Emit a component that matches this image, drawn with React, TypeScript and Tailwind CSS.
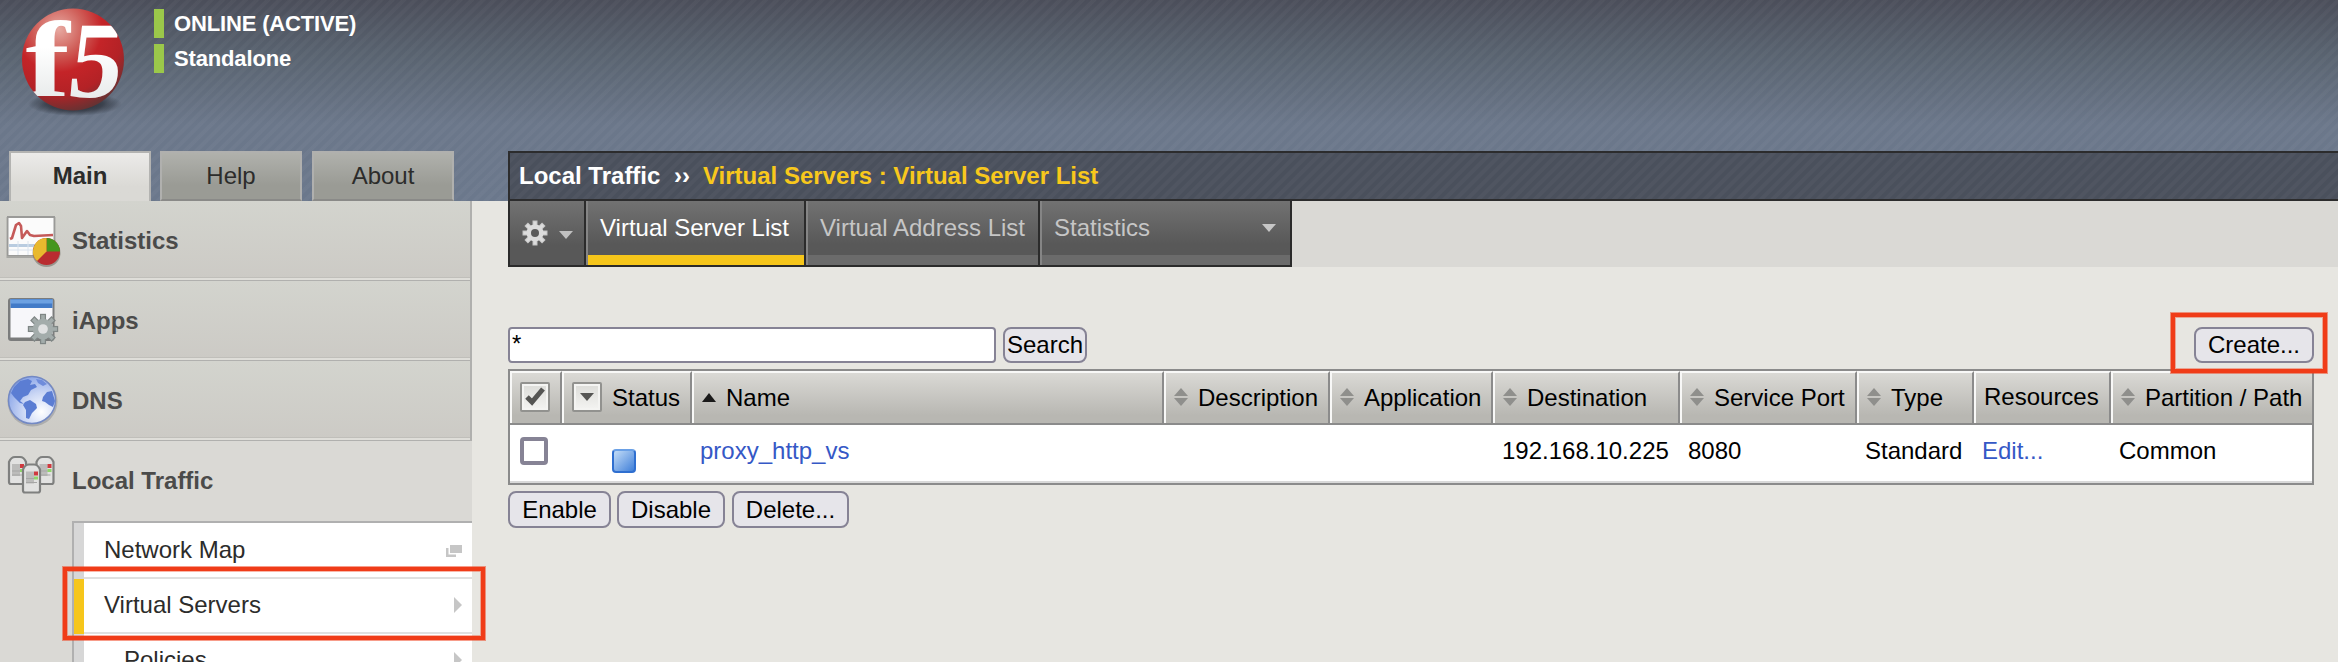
import type { ReactNode } from "react";

function Logo() {
  return (
    <svg className="block" width="120" height="112" viewBox="14 6 120 112">
      <defs>
        <radialGradient id="ball" cx="0.36" cy="0.2" r="0.85">
          <stop offset="0" stopColor="#e8aaa2" />
          <stop offset="0.28" stopColor="#d0605a" />
          <stop offset="0.5" stopColor="#c42428" />
          <stop offset="0.75" stopColor="#b32226" />
          <stop offset="1" stopColor="#5c3434" />
        </radialGradient>
        <radialGradient id="ballShadow">
          <stop offset="0" stopColor="#15181e" stopOpacity="0.95" />
          <stop offset="0.6" stopColor="#20242c" stopOpacity="0.6" />
          <stop offset="1" stopColor="#20242c" stopOpacity="0" />
        </radialGradient>
        <linearGradient id="digits" x1="0" y1="0" x2="0" y2="1">
          <stop offset="0.4" stopColor="#ffffff" />
          <stop offset="1" stopColor="#dfe3e3" />
        </linearGradient>
        <clipPath id="ballClip">
          <circle cx="73" cy="59.500" r="51" />
        </clipPath>
      </defs>
      <ellipse cx="75" cy="104" rx="47" ry="12" fill="url(#ballShadow)" />
      <circle cx="73" cy="59.500" r="51" fill="url(#ball)" />
      <g clipPath="url(#ballClip)" fontFamily="'Liberation Serif', serif" fontWeight="700" fontSize="109" fill="url(#digits)">
        <text transform="translate(25.500 96) scale(1.22 1)">f</text>
        <text transform="translate(65.500 96.500) skewX(-7) scale(0.98 1)">5</text>
      </g>
    </svg>
  );
}

const TEETH = [0, 45, 90, 135, 180, 225, 270, 315];

function Gear({ size, fill, stroke, hole }: { size: number; fill: string; stroke: string; hole: string }) {
  return (
    <svg width={size} height={size} viewBox="-14 -14 28 28">
      <g fill={fill} stroke={stroke} strokeWidth="1">
        {TEETH.map((a) => (
          <rect key={a} x="-2" y="-12" width="4" height="8" transform={`rotate(${a})`} />
        ))}
      </g>
      <circle r="8.500" fill={fill} />
      <circle r="4" fill={hole} />
    </svg>
  );
}

function StatsIcon() {
  return (
    <svg width="58" height="54" viewBox="4 24 58 54">
      <rect x="6.500" y="28" width="49" height="41" fill="#8d8d8a" opacity="0.6" />
      <rect x="7" y="27" width="48" height="40" fill="#9a9a98" />
      <rect x="8.500" y="29" width="45" height="37" fill="#fbfbfb" />
      <path d="M9 55h44v3H9z" fill="#b9cce0" />
      <path d="M9 61h44M18 52v14M28 52v14" stroke="#dbe4ee" strokeWidth="1" />
      <path d="M10 50l2-1 4-13 3-2 2 3 1 12 5-7 3 4 4 1 19-1" fill="none" stroke="#c55a59" strokeWidth="2.600" strokeLinejoin="round" />
      <circle cx="46.500" cy="64" r="14" fill="#6d6a60" opacity="0.55" />
      <circle cx="46.500" cy="62.500" r="13.500" fill="#b92c30" />
      <path d="M46.500 62.500V49a13.500 13.500 0 0 1 13.500 13.500z" fill="#45961c" />
      <path d="M46.500 62.500V49a13.500 13.500 0 0 0-9.500 23z" fill="#e8b92e" />
    </svg>
  );
}

function AppsIcon() {
  return (
    <div className="relative h-[54px] w-[58px]">
      <svg width="58" height="54" viewBox="4 24 58 54">
        <rect x="8" y="29" width="46.500" height="43" rx="3" fill="#7b7c7c" />
        <rect x="10.500" y="30.500" width="42" height="38" fill="#f7f7fa" />
        <rect x="10.500" y="30" width="42" height="9" fill="#427bc8" />
        <rect x="10.500" y="30.500" width="42" height="4" fill="#6ca1e2" />
      </svg>
      <div className="absolute left-[22px] top-[19px]">
        <Gear size={34} fill="#a3acab" stroke="#7f8685" hole="#e0e1e2" />
      </div>
    </div>
  );
}

function GlobeIcon() {
  return (
    <svg width="58" height="58" viewBox="4 22 58 58">
      <defs>
        <radialGradient id="sea" cx="0.7" cy="0.75" r="0.8">
          <stop offset="0" stopColor="#ffffff" />
          <stop offset="0.5" stopColor="#cbd7f5" />
          <stop offset="1" stopColor="#8ba6e8" />
        </radialGradient>
      </defs>
      <circle cx="32.500" cy="52.500" r="25" fill="#8b8d94" opacity="0.5" />
      <circle cx="32" cy="51" r="23.500" fill="url(#sea)" stroke="#7389c4" strokeWidth="1.500" />
      <path d="M14 38l6-6 8-2 4 2-2 4 5-1 2 3-6 3-3 5-5 2-3 4 4 3-4-1-6-6-3-4z" fill="#5b7dd3" />
      <path d="M25 53l5-2 6 4 1 4-5 5-3 6-3-1v-8l-3-5z" fill="#5b7dd3" />
      <path d="M43 48l4-5 5-1 3 10-2 6-4-2-4-3-3-1z" fill="#5b7dd3" />
      <path d="M36 30l6 1 5 4-4 2-5-3z" fill="#6f8cdb" />
    </svg>
  );
}

function ServersIcon() {
  const box = (x: number, y: number, h: number) => (
    <g>
      <path
        d={`M${x} ${y + 6}q2-5 6-5h5q4 0 6 5v${h - 8}q0 2-2 2h-13q-2 0-2-2z`}
        fill="#e2e2e1"
        stroke="#7f807f"
        strokeWidth="2.200"
      />
      <path d={`M${x + 3} ${y + 8}h8v12h-8z`} fill="#bcbcbb" />
      <path d={`M${x + 3} ${y + 15}h11M${x + 3} ${y + 19}h11`} stroke="#a6a6a5" strokeWidth="1.200" />
      <rect x={x + 11} y={y + 8} width="4" height="4" fill="#cf3a3f" />
      <rect x={x + 11} y={y + 13} width="4" height="3" fill="#8fd66c" />
    </g>
  );
  return (
    <svg width="58" height="54" viewBox="4 20 58 54">
      {box(9, 22, 28)}
      {box(36.5, 22, 28)}
      {box(23, 29.5, 29)}
    </svg>
  );
}

function SortIcon() {
  return (
    <svg className="block shrink-0" width="14" height="18" viewBox="0 0 14 18">
      <path d="M7 0l7 8H0zM7 18l7-8H0z" fill="#8f8f8c" />
    </svg>
  );
}

function DownArrow({ color }: { color: string }) {
  return (
    <svg className="block shrink-0" width="14" height="8" viewBox="0 0 14 8">
      <path d="M0 0h14L7 8z" fill={color} />
    </svg>
  );
}

function RightArrow() {
  return (
    <svg className="block" width="8" height="16" viewBox="0 0 8 16">
      <path d="M0 0l8 8-8 8z" fill="#c6c6c6" />
    </svg>
  );
}

function TopTab({ children, active = false }: { children: ReactNode; active?: boolean }) {
  return (
    <div
      className={
        active
          ? "h-[50px] w-[142px] border-2 border-b-0 border-[#b3b3b1] bg-linear-to-b from-[#ecebe9] to-[#dad9d5] to-70% text-center font-bold leading-[46px]"
          : "h-[50px] w-[142px] border-2 border-[#b0b0ae] border-b-[#8a8a88] bg-linear-to-b from-[#b0b1ac] to-[#9a9b95] to-70% text-center leading-[46px]"
      }
    >
      {children}
    </div>
  );
}

function MenuItem({ icon, children }: { icon: ReactNode; children: ReactNode }) {
  return (
    <div className="flex h-[80px] items-start border-b border-[#b0b0ae] bg-linear-to-b from-[#d3d4ce] to-[#cccac5]">
      <div className="flex h-[79px] w-full items-center border-b-2 border-[#dfded9] shadow-[inset_0_-1px_0_#c0bfba]">
        <div className="ml-[4px] flex w-[68px]">{icon}</div>
        <span className="pt-[2px] font-bold text-[#4b4b4a]">{children}</span>
      </div>
    </div>
  );
}

function NavTab({ children, active = false, wide = "" }: { children: ReactNode; active?: boolean; wide?: string }) {
  return (
    <div className={`flex h-[64px] flex-col border-l-2 border-r-2 border-l-[#858585] border-r-[#2b2b2b] ${wide}`}>
      <div
        className={
          active
            ? "flex h-[54px] justify-between whitespace-nowrap bg-linear-to-b from-[#727272] to-[#585858] to-80% pl-[12px] pr-[14px] pt-[13px] text-white"
            : "flex h-[54px] justify-between whitespace-nowrap bg-linear-to-b from-[#727272] to-[#585858] to-80% pl-[12px] pr-[14px] pt-[13px] text-[#c6c6c6]"
        }
      >
        {children}
      </div>
      <div className={active ? "h-[10px] bg-[#f6c61b]" : "h-[10px] bg-[#6b6b6b]"} />
    </div>
  );
}

function Head({ children, last = false, sort = false }: { children: ReactNode; last?: boolean; sort?: boolean }) {
  return (
    <div
      className={
        last
          ? "flex h-[52px] items-center whitespace-nowrap border-l-2 border-t-2 border-[#f8f8f7] bg-linear-to-b from-[#dad9d5] to-[#b8b7b2] to-85% pl-[8px]"
          : "flex h-[52px] items-center whitespace-nowrap border-l-2 border-r-2 border-t-2 border-[#f8f8f7] border-r-[#8b8b8b] bg-linear-to-b from-[#dad9d5] to-[#b8b7b2] to-85% pl-[8px]"
      }
    >
      {sort && (
        <span className="mb-[2px] mr-[10px]">
          <SortIcon />
        </span>
      )}
      {children}
    </div>
  );
}

function IconBox({ children }: { children: ReactNode }) {
  return (
    <span className="mb-[2px] flex size-[30px] items-center justify-center rounded-[2px] border-2 border-[#92928f] bg-linear-to-b from-[#dcdcd8] to-[#f4f4f2] shadow-[inset_0_0_0_2px_#f4f4f2]">
      {children}
    </span>
  );
}

function Button({ children, size }: { children: ReactNode; size: string }) {
  return (
    <button
      className={`flex items-center justify-center whitespace-nowrap rounded-[8px] border-2 border-[#868395] bg-[#e6e5ea] text-black ${size}`}
    >
      {children}
    </button>
  );
}

const COLUMNS = "grid grid-cols-[52px_130px_472px_166px_163px_187px_177px_117px_137px_201px]";

export default function App() {
  return (
    <div className="relative h-[662px] w-[2338px] overflow-hidden bg-[#e7e6e1] font-['Liberation_Sans',Arial,sans-serif] text-[24px] leading-[28px] text-black">
      <header className="flex h-[201px] flex-col bg-[repeating-linear-gradient(135deg,#ffffff00_0px,#ffffff00_3px,#ffffff08_4px,#ffffff08_7px,#ffffff00_8px),linear-gradient(180deg,#4b4e5a_0px,#596370_55px,#6b778a_125px,#6b788c_201px)]">
        <div className="flex h-[151px]">
          <div className="ml-[14px] mt-[6px]">
            <Logo />
          </div>
          <div className="ml-[20px] mt-[9px] flex flex-col gap-[6px] text-[22px] font-bold text-white">
            <div className="h-[29px] border-l-[10px] border-[#9bc84a] pl-[10px] leading-[29px] tracking-[-0.15px]">ONLINE (ACTIVE)</div>
            <div className="h-[29px] border-l-[10px] border-[#9bc84a] pl-[10px] leading-[29px] tracking-[-0.15px]">Standalone</div>
          </div>
        </div>
        <div className="flex h-[50px]">
          <div className="flex w-[508px] pl-[9px] text-[#2c2c2b]">
            <TopTab active>Main</TopTab>
            <div className="w-[9px]" />
            <TopTab>Help</TopTab>
            <div className="w-[10px]" />
            <TopTab>About</TopTab>
          </div>
          <div className="flex flex-1 border-b-2 border-l-2 border-t-2 border-[#2c2c2d] bg-[repeating-linear-gradient(135deg,#ffffff00_0px,#ffffff00_3px,#ffffff08_4px,#ffffff08_7px,#ffffff00_8px)] bg-[#4a505c] pl-[9px] pt-[9px] font-bold text-white">
            <span className="w-[155px]">Local Traffic</span>
            <span className="w-[29px]">››</span>
            <span className="text-[#f8c81c]">Virtual Servers : Virtual Server List</span>
          </div>
        </div>
      </header>

      <div className="flex h-[461px]">
        <aside className="w-[472px] shrink-0 bg-[#dad9d5]">
          <div className="border-r-2 border-[#b0b0ae]">
            <MenuItem icon={<StatsIcon />}>Statistics</MenuItem>
            <MenuItem icon={<AppsIcon />}>iApps</MenuItem>
            <MenuItem icon={<GlobeIcon />}>DNS</MenuItem>
          </div>
          <div className="flex h-[80px] items-center">
            <div className="ml-[4px] flex w-[68px]">
              <ServersIcon />
            </div>
            <span className="font-bold text-[#4b4b4a]">Local Traffic</span>
          </div>
          <div className="ml-[72px] border-l-2 border-t-2 border-[#b0b0b0] bg-white text-[#2c2c2b]">
            <div className="flex h-[56px] border-l-[10px] border-[#d7d7d7]">
              <div className="flex flex-1 items-center justify-between border-b-2 border-[#e0e0e0] pl-[20px] pr-[10px]">
                <span>Network Map</span>
                <svg width="16" height="13" viewBox="0 0 16 13">
                  <path d="M4 1h12v8H4zM0 4h2.500v6.500H10V13H0z" fill="#c6c6c6" />
                </svg>
              </div>
            </div>
            <div className="flex h-[55px] border-l-[10px] border-[#f6c61b]">
              <div className="flex flex-1 items-center justify-between border-b-2 border-[#e0e0e0] pb-[2px] pl-[20px] pr-[10px]">
                <span>Virtual Servers</span>
                <RightArrow />
              </div>
            </div>
            <div className="flex h-[55px] border-l-[10px] border-[#d7d7d7]">
              <div className="flex flex-1 items-center justify-between border-b-2 border-[#e0e0e0] pb-[2px] pl-[40px] pr-[10px]">
                <span>Policies</span>
                <RightArrow />
              </div>
            </div>
          </div>
        </aside>

        <main className="ml-[36px] flex-1">
          <nav className="flex h-[66px] bg-[#dad9d5]">
            <div className="flex border-b-2 border-l-2 border-[#2b2b2b]">
              <div className="flex h-[64px] w-[76px] border-r-2 border-[#2b2b2b] bg-linear-to-b from-[#727272] to-[#585858] to-70% pl-[11px] pt-[18px]">
                <Gear size={28} fill="#dcdcdc" stroke="#c4c4c4" hole="#5c5c5c" />
                <span className="ml-[10px] mt-[12px]">
                  <DownArrow color="#c0c0c0" />
                </span>
              </div>
              <NavTab active wide="w-[220px]">Virtual Server List</NavTab>
              <NavTab wide="w-[234px]">Virtual Address List</NavTab>
              <NavTab wide="w-[252px]">
                <span>Statistics</span>
                <span className="mt-[10px]">
                  <DownArrow color="#c6c6c6" />
                </span>
              </NavTab>
            </div>
          </nav>

          <div className="mt-[60px] flex h-[36px] w-[1806px]">
            <input
              className="mr-[7px] h-[36px] w-[488px] rounded-[4px] border-2 border-[#868395] bg-white pb-[3px] pl-[2px] outline-none"
              defaultValue="*"
            />
            <Button size="h-[36px] w-[84px]">Search</Button>
            <div className="flex-1" />
            <Button size="h-[36px] w-[120px]">Create...</Button>
          </div>

          <section className="mt-[6px] h-[116px] w-[1806px] border-2 border-[#8b8b8b] bg-white">
            <div className={`${COLUMNS} h-[54px] border-b-2 border-[#8b8b8b]`}>
              <Head>
                <IconBox>
                  <svg width="20" height="20" viewBox="0 0 20 20">
                    <path d="M2 10l5 5L18 2" fill="none" stroke="#555553" strokeWidth="5" />
                  </svg>
                </IconBox>
              </Head>
              <Head>
                <IconBox>
                  <DownArrow color="#555553" />
                </IconBox>
                <span className="ml-[10px]">Status</span>
              </Head>
              <Head>
                <svg className="mb-[2px]" width="14" height="9" viewBox="0 0 14 9">
                  <path d="M7 0l7 9H0z" fill="#1a1a1a" />
                </svg>
                <span className="ml-[10px]">Name</span>
              </Head>
              <Head sort>Description</Head>
              <Head sort>Application</Head>
              <Head sort>Destination</Head>
              <Head sort>Service Port</Head>
              <Head sort>Type</Head>
              <Head>
                <span className="pb-[2px]">Resources</span>
              </Head>
              <Head sort last>
                Partition / Path
              </Head>
            </div>
            <div className={`${COLUMNS} h-[58px] border-b-2 border-[#d9d9d9] pt-[12px]`}>
              <div className="ml-[10px] size-[28px] rounded-[4px] border-4 border-[#868395] bg-white" />
              <div className="pl-[50px] pt-[12px]">
                <div className="size-[24px] rounded-[4px] border-2 border-[#2f6fd0] border-t-[#6aa0e6] bg-linear-to-br from-[#c3dcf6] to-[#3f7fd8]" />
              </div>
              <div className="pl-[8px] text-[#3558c6]">proxy_http_vs</div>
              <div />
              <div />
              <div className="pl-[9px]">192.168.10.225</div>
              <div className="pl-[8px]">8080</div>
              <div className="pl-[8px]">Standard</div>
              <div className="pl-[8px] text-[#3558c6]">Edit...</div>
              <div className="pl-[8px]">Common</div>
            </div>
          </section>

          <div className="mt-[6px] flex">
            <Button size="mr-[6px] h-[37px] w-[103px]">Enable</Button>
            <Button size="mr-[7px] h-[37px] w-[108px]">Disable</Button>
            <Button size="h-[37px] w-[117px]">Delete...</Button>
          </div>
        </main>
      </div>

      <div className="absolute left-[63px] top-[567px] h-[73px] w-[422px] border-4 border-[#f03c18] shadow-[0_0_0_1px_#f03c1880,inset_0_0_0_1px_#f03c1860]" />
      <div className="absolute left-[2171px] top-[313px] h-[60px] w-[156px] border-4 border-[#f03c18] shadow-[0_0_0_1px_#f03c1880,inset_0_0_0_1px_#f03c1860]" />
    </div>
  );
}
